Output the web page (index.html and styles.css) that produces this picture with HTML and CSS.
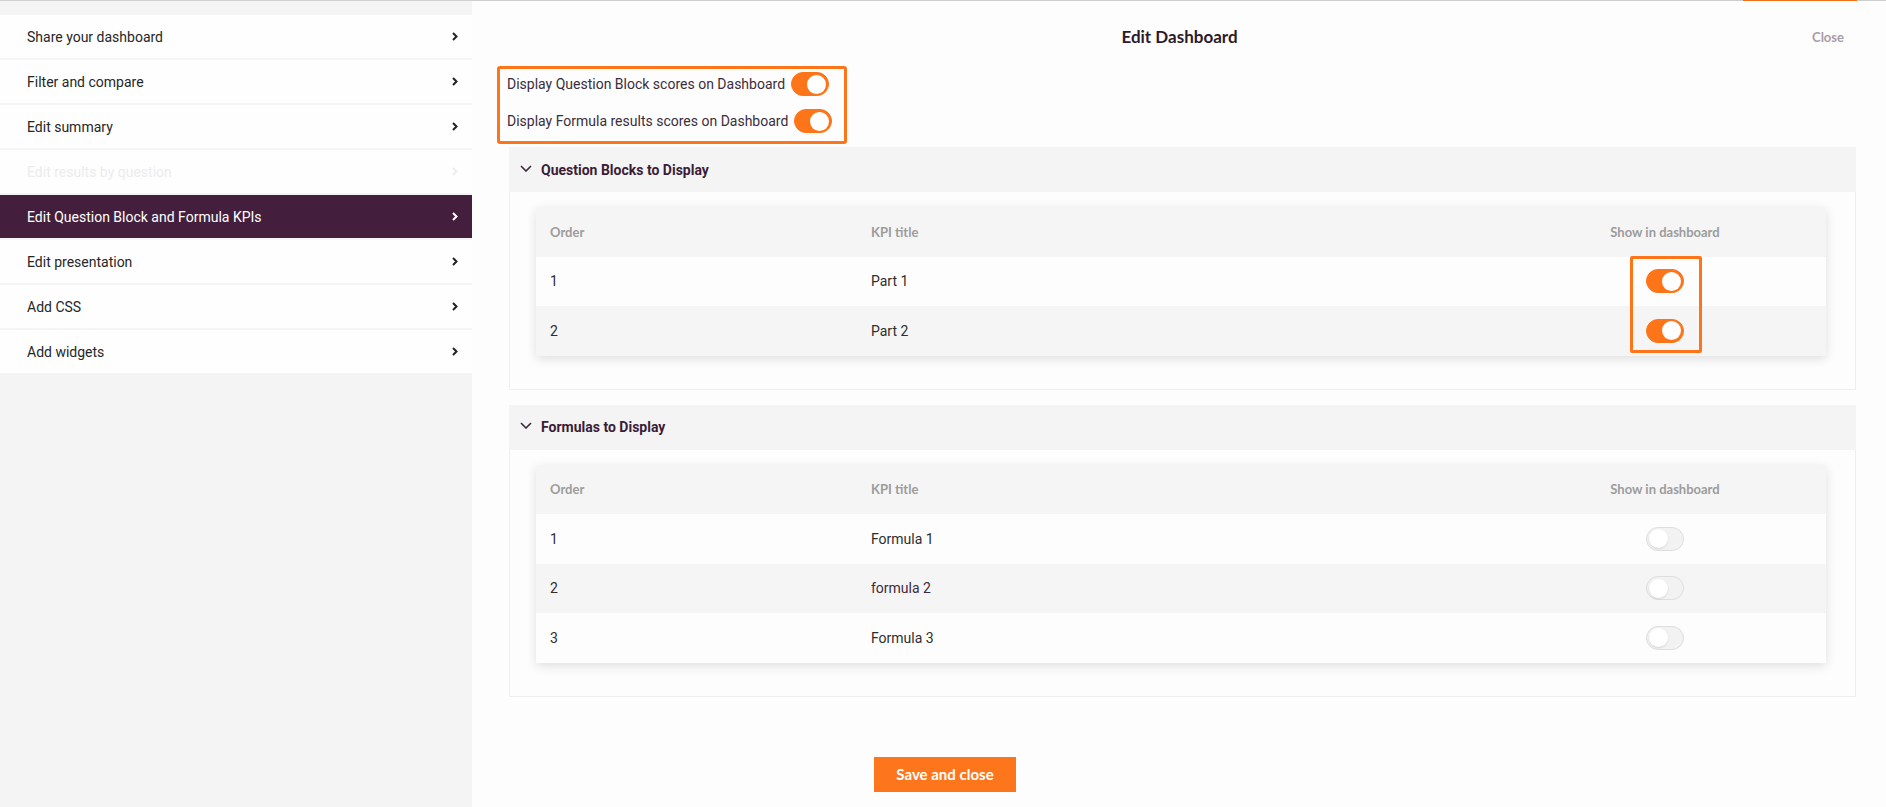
FILE: index.html
```html
<!DOCTYPE html>
<html lang="en">

<head>
  <meta charset="UTF-8">
  <meta name="viewport" content="width=device-width, initial-scale=1.0">
  <title>Edit Dashboard</title>
  <link rel="stylesheet" href="styles.css">
</head>

<body>
  <div class="topbar"><span class="topbar-accent"></span></div>
  <div class="layout">
    <aside class="sidebar">
      <nav class="menu">
        <a class="menu-item" href="#">Share your dashboard
          <svg class="chev" viewBox="0 0 6 9"><polyline points="1,1 4.5,4.5 1,8" /></svg></a>
        <a class="menu-item" href="#">Filter and compare
          <svg class="chev" viewBox="0 0 6 9"><polyline points="1,1 4.5,4.5 1,8" /></svg></a>
        <a class="menu-item" href="#">Edit summary
          <svg class="chev" viewBox="0 0 6 9"><polyline points="1,1 4.5,4.5 1,8" /></svg></a>
        <a class="menu-item disabled" href="#">Edit results by question
          <svg class="chev" viewBox="0 0 6 9"><polyline points="1,1 4.5,4.5 1,8" /></svg></a>
        <a class="menu-item active" href="#">Edit Question Block and Formula KPIs
          <svg class="chev" viewBox="0 0 6 9"><polyline points="1,1 4.5,4.5 1,8" /></svg></a>
        <a class="menu-item" href="#">Edit presentation
          <svg class="chev" viewBox="0 0 6 9"><polyline points="1,1 4.5,4.5 1,8" /></svg></a>
        <a class="menu-item" href="#">Add CSS
          <svg class="chev" viewBox="0 0 6 9"><polyline points="1,1 4.5,4.5 1,8" /></svg></a>
        <a class="menu-item" href="#">Add widgets
          <svg class="chev" viewBox="0 0 6 9"><polyline points="1,1 4.5,4.5 1,8" /></svg></a>
      </nav>
    </aside>

    <main class="editor">
      <header class="editor-head">
        <span></span>
        <h1>Edit Dashboard</h1>
        <a class="close" href="#">Close</a>
      </header>

      <div class="options">
        <label class="option">Display Question Block scores on Dashboard <span class="switch on"></span></label>
        <label class="option">Display Formula results scores on Dashboard <span class="switch on"></span></label>
      </div>

      <section class="panel">
        <div class="panel-head">
          <svg class="chev-down" viewBox="0 0 12 7"><polyline points="1,1 6,6 11,1" /></svg>
          Question Blocks to Display
        </div>
        <div class="panel-body">
          <div class="kpi-table">
            <div class="kpi-row kpi-header">
              <span>Order</span><span>KPI title</span><span class="col-show">Show in dashboard</span>
            </div>
            <div class="kpi-row">
              <span>1</span><span>Part 1</span><span class="col-show"><span class="switch on"></span></span>
            </div>
            <div class="kpi-row">
              <span>2</span><span>Part 2</span><span class="col-show"><span class="switch on"></span></span>
            </div>
            <div class="highlight"></div>
          </div>
        </div>
      </section>

      <section class="panel">
        <div class="panel-head">
          <svg class="chev-down" viewBox="0 0 12 7"><polyline points="1,1 6,6 11,1" /></svg>
          Formulas to Display
        </div>
        <div class="panel-body">
          <div class="kpi-table">
            <div class="kpi-row kpi-header">
              <span>Order</span><span>KPI title</span><span class="col-show">Show in dashboard</span>
            </div>
            <div class="kpi-row">
              <span>1</span><span>Formula 1</span><span class="col-show"><span class="switch"></span></span>
            </div>
            <div class="kpi-row">
              <span>2</span><span class="lower">formula 2</span><span class="col-show"><span class="switch"></span></span>
            </div>
            <div class="kpi-row">
              <span>3</span><span>Formula 3</span><span class="col-show"><span class="switch"></span></span>
            </div>
          </div>
        </div>
      </section>

      <div class="editor-foot">
        <button type="button" class="save">Save and close</button>
      </div>
    </main>
  </div>
</body>

</html>
```

FILE: styles.css
```css
body {
  margin: 0;
  font-family: Roboto, "Liberation Sans", sans-serif;
  font-size: 14px;
  color: #2e2e2e;
  background-color: #fdfdfd;
}

.topbar {
  display: flex;
  height: 1px;
  background-color: #cfcfcf;
}

.topbar-accent {
  width: 114px;
  margin-left: 1743px;
  background-color: #f07018;
}

.layout {
  display: flex;
  height: 806px;
}

/* left menu */
.sidebar {
  width: 472px;
  flex-shrink: 0;
  background-color: #f4f4f4;
  padding-top: 14px;
}

.menu {
  display: flex;
  flex-direction: column;
  gap: 2px;
}

.menu-item {
  display: flex;
  align-items: center;
  justify-content: space-between;
  height: 43px;
  padding: 0 14px 0 27px;
  background-color: #fefefe;
  color: #262626;
  text-decoration: none;
}

.menu-item.disabled {
  color: #ececec;
}

.menu-item.active {
  background-color: #431f3d;
  color: #fff;
}

.chev {
  width: 6px;
  height: 9px;
  fill: none;
  stroke: currentColor;
  stroke-width: 2;
}

.menu-item .chev {
  color: #222;
}

.menu-item.active .chev {
  color: #fff;
}

.menu-item.disabled .chev {
  color: #ececec;
}

/* right side */
.editor {
  flex: 1;
  padding: 0 30px 0 25px;
}

.editor-head {
  display: grid;
  grid-template-columns: 1fr auto 1fr;
  align-items: center;
  height: 59px;
  padding-top: 6px;
}

.editor-head h1 {
  margin: 0;
  font-family: Lato, sans-serif;
  font-size: 17px;
  font-weight: 700;
  color: #2c1a2b;
  padding-left: 6px;
}

.close {
  justify-self: end;
  margin-right: 12px;
  font-family: Lato, sans-serif;
  font-size: 13px;
  font-weight: 700;
  color: #aa9ba8;
  text-decoration: none;
}

.options {
  display: flex;
  flex-direction: column;
  gap: 7px;
  width: fit-content;
  padding: 0 12px 5px 7px;
  border: 3px solid #fd7419;
  border-radius: 3px;
}

.option {
  display: flex;
  align-items: center;
  gap: 6px;
  height: 30px;
  color: #3b2d3b;
}

.switch {
  display: inline-flex;
  align-items: center;
  box-sizing: border-box;
  width: 38px;
  height: 24px;
  padding: 2px;
  border-radius: 12px;
  border: 1px solid #dedede;
  background-color: #f2f2f2;
}

.switch::after {
  content: "";
  width: 19px;
  height: 19px;
  border-radius: 50%;
  background-color: #fff;
  box-shadow: 0 1px 2px rgba(0, 0, 0, 0.12);
}

.switch.on {
  justify-content: flex-end;
  border-color: #fd7419;
  background-color: #fd7419;
}

.switch.on::after {
  box-shadow: none;
}

.panel {
  margin: 3px 0 0 12px;
}

.panel + .panel {
  margin-top: 15px;
}

.panel-head {
  display: flex;
  align-items: center;
  gap: 9px;
  height: 45px;
  padding-left: 11px;
  background-color: #f4f4f4;
  font-weight: 700;
  color: #3b1c37;
}

.chev-down {
  width: 12px;
  height: 7px;
  fill: none;
  stroke: #3b2b3a;
  stroke-width: 1.6;
  margin-top: -3px;
}

.panel-body {
  padding: 15px 29px 33px 26px;
  border: 1px solid #efefef;
  border-top: 0;
}

.kpi-table {
  position: relative;
  background-color: #fdfdfd;
  box-shadow: 0 3px 10px rgba(0, 0, 0, 0.12);
}

.kpi-row {
  display: grid;
  grid-template-columns: 321px 1fr 130px;
  align-items: center;
  height: 49.5px;
  padding: 0 96px 0 14px;
}

.kpi-row:nth-child(odd) {
  background-color: #f5f5f5;
}

.kpi-header {
  font-family: Lato, sans-serif;
  font-size: 13px;
  font-weight: 700;
  color: #9c9c9c;
}

.col-show {
  display: flex;
  justify-content: center;
}

.lower {
  color: #3f2a3d;
}

/* orange annotation round the switches */
.highlight {
  position: absolute;
  left: 1094px;
  top: 49px;
  width: 66px;
  height: 91px;
  border: 3px solid #fd7419;
  border-radius: 2px;
}

.editor-foot {
  padding: 60px 0 0 377px;
}

.save {
  width: 142px;
  height: 35px;
  border: 0;
  background-color: #fe761b;
  color: #fff;
  font-family: Lato, sans-serif;
  font-size: 15px;
  font-weight: 700;
}
```
